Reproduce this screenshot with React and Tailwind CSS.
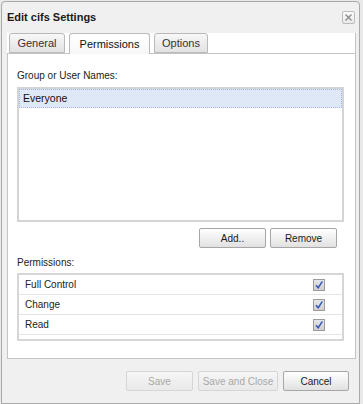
// Edit cifs Settings — permissions tab of a share dialog

const font = { fontFamily: '"Liberation Sans", Arial, sans-serif' }

function CloseIcon() {
  return (
    <button className="w-[13px] h-[13px] border border-[#bcbcbc] rounded-[2px] bg-gradient-to-b from-[#fbfbfb] to-[#e9e9e9] flex items-center justify-center">
      <svg width="9" height="9" viewBox="0 0 9 9">
        <path d="M1.5 1.5 L7.5 7.5 M7.5 1.5 L1.5 7.5" stroke="#8a8a8a" strokeWidth="1.3" />
      </svg>
    </button>
  )
}

function Tab({ label, active, width }) {
  return (
    <div
      className={
        'flex items-center justify-center border border-[#b9b9b9] rounded-t-[3px] text-[11px] ' +
        (active
          ? 'h-[21px] -mb-px border-b-0 bg-gradient-to-b from-[#ffffff] to-[#f7f7f7] text-[#111]'
          : 'h-[20px] bg-gradient-to-b from-[#f8f8f8] to-[#e2e2e2] text-[#333]')
      }
      style={{ width }}
    >
      {label}
    </div>
  )
}

function Btn({ label, width, disabled }) {
  return (
    <button
      className={
        'h-[20px] rounded-[2px] border text-[10px] bg-gradient-to-b ' +
        (disabled
          ? 'border-[#d6d6d6] from-[#f6f6f6] to-[#e9e9e9] text-[#a8a8a8]'
          : 'border-[#a6a6a6] from-[#ffffff] to-[#e1e1e1] text-[#1a1a1a]')
      }
      style={{ width }}
    >
      {label}
    </button>
  )
}

function Check() {
  return (
    <div className="w-[12px] h-[12px] border border-[#9c9c9c] bg-gradient-to-b from-[#e6e6e6] to-[#cfcfcf] flex items-center justify-center">
      <svg width="10" height="10" viewBox="0 0 10 10">
        <path d="M2 5.2 L4.2 7.8 L8.4 1.4" fill="none" stroke="#3154b6" strokeWidth="1.5" />
      </svg>
    </div>
  )
}

const perms = ['Full Control', 'Change', 'Read']

export default function App() {
  return (
    <div className="w-[363px] h-[404px] bg-[#e9e9e9] pt-px pl-px overflow-hidden" style={font}>
      <div className="w-[359px] h-[403px] flex flex-col border border-[#a9a9a9] rounded-t-[4px] bg-[#f0f0f0]">

        {/* Title bar */}
        <div className="h-[31px] flex items-center justify-between pl-[5px] pr-[4px]">
          <span className="text-[11px] font-bold text-[#1a1a1a]">Edit cifs Settings</span>
          <CloseIcon />
        </div>

        {/* Tab strip */}
        <div className="ml-[5px] mr-[3px] h-[21px] flex items-end gap-[4px] pl-[2px] bg-white border-r border-b border-[#c4c4c4]">
          <Tab label="General" width={56} />
          <Tab label="Permissions" width={81} active />
          <Tab label="Options" width={54} />
        </div>

        {/* Panel body */}
        <div className="ml-[5px] mr-[3px] flex flex-col bg-white border-x border-b border-[#c4c4c4] pl-[9px] pr-[11px] pt-[15px] pb-[17px] text-[10px] text-[#222]">
          <div className="h-[14px] leading-[14px]">Group or User Names:</div>

          <div className="mt-[4px] h-[135px] border-2 border-[#d4d4d4] bg-white">
            <div className="h-[19px] border border-dotted border-[#9fb6e3] bg-[#dfe8f6] pl-[3px] flex items-center text-[10.5px] text-[#111]">
              Everyone
            </div>
          </div>

          <div className="mt-[6px] flex justify-end gap-[4px] pr-[7px]">
            <Btn label="Add.." width={67} />
            <Btn label="Remove" width={67} />
          </div>

          <div className="mt-[8px] h-[14px] leading-[14px]">Permissions:</div>

          <div className="mt-[3px] h-[68px] border-2 border-[#d6d6d6]">
            {perms.map(p => (
              <div key={p} className="h-[20px] flex items-center justify-between pl-[6px] pr-[17px] border-b border-[#e3e3e3] text-[#222]">
                <span>{p}</span>
                <Check />
              </div>
            ))}
          </div>
        </div>

        {/* Footer */}
        <div className="mt-[12px] flex justify-end gap-[5px] pr-[10px]">
          <Btn label="Save" width={67} disabled />
          <Btn label="Save and Close" width={80} disabled />
          <Btn label="Cancel" width={66} />
        </div>
      </div>
    </div>
  )
}
